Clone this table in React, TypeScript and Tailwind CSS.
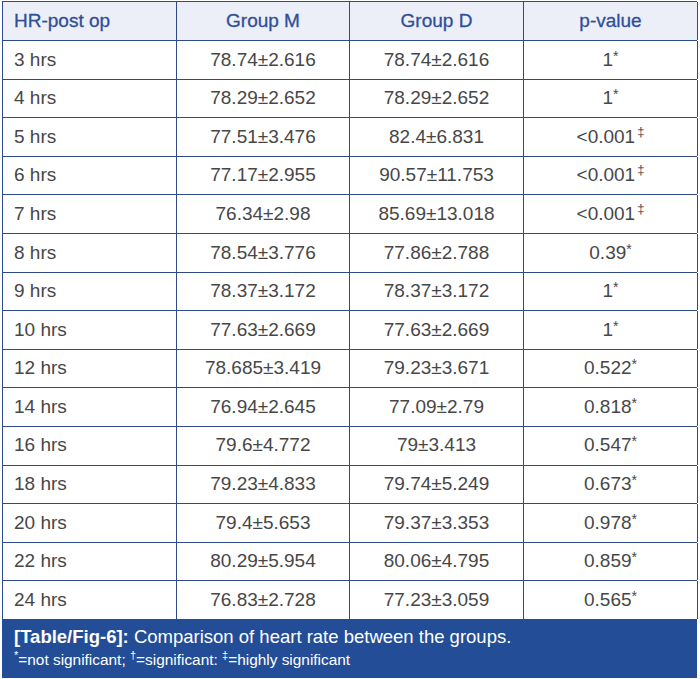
const rows: [string, string, string, string, string][] = [
  ["3 hrs", "78.74±2.616", "78.74±2.616", "1", "*"],
  ["4 hrs", "78.29±2.652", "78.29±2.652", "1", "*"],
  ["5 hrs", "77.51±3.476", "82.4±6.831", "<0.001", "‡"],
  ["6 hrs", "77.17±2.955", "90.57±11.753", "<0.001", "‡"],
  ["7 hrs", "76.34±2.98", "85.69±13.018", "<0.001", "‡"],
  ["8 hrs", "78.54±3.776", "77.86±2.788", "0.39", "*"],
  ["9 hrs", "78.37±3.172", "78.37±3.172", "1", "*"],
  ["10 hrs", "77.63±2.669", "77.63±2.669", "1", "*"],
  ["12 hrs", "78.685±3.419", "79.23±3.671", "0.522", "*"],
  ["14 hrs", "76.94±2.645", "77.09±2.79", "0.818", "*"],
  ["16 hrs", "79.6±4.772", "79±3.413", "0.547", "*"],
  ["18 hrs", "79.23±4.833", "79.74±5.249", "0.673", "*"],
  ["20 hrs", "79.4±5.653", "79.37±3.353", "0.978", "*"],
  ["22 hrs", "80.29±5.954", "80.06±4.795", "0.859", "*"],
  ["24 hrs", "76.83±2.728", "77.23±3.059", "0.565", "*"],
];

const cell = "border-r border-[#2c4b88] flex items-center justify-center";

export default function App() {
  return (
    <div className="w-[700px] h-[679px] bg-white pt-[1px] pl-[2px] font-['Liberation_Sans',Arial,sans-serif]">
      <div className="w-[695px] border-l border-t border-[#2c4b88]">
        <div className="grid grid-cols-[174px_173px_174px_174px] h-[39px] bg-[#eceef8] border-b border-[#2c4b88] text-[19px] text-[#2f4f98] [-webkit-text-stroke:0.3px_#2f4f98]">
          <div className="border-r border-[#2c4b88] flex items-center pl-[11px]">HR-post op</div>
          <div className={cell}>Group M</div>
          <div className={cell}>Group D</div>
          <div className={cell}>p-value</div>
        </div>
        {rows.map(([t, m, d, p, s]) => (
          <div
            key={t}
            className="grid grid-cols-[174px_173px_174px_174px] h-[38.6px] border-b border-[#2c4b88] text-[19px] text-[#474747] last:border-b-0"
          >
            <div className="border-r border-[#2c4b88] flex items-center pl-[11px]">{t}</div>
            <div className={cell}>{m}</div>
            <div className={cell}>{d}</div>
            <div className={cell}>
              <span>
                {p}
                <sup className={s === "*" ? "text-[14px] top-[-5px]" : "text-[13px] top-[-7px] ml-[2px]"}>{s}</sup>
              </span>
            </div>
          </div>
        ))}
        <div className="bg-[#234d96] h-[58px] -ml-[1px] w-[695px] text-white px-[12px] pt-[5px]">
          <div className="text-[18.5px] leading-[23px]">
            <span className="font-bold">[Table/Fig-6]:</span> Comparison of heart rate between the groups.
          </div>
          <div className="text-[15.4px] leading-[21px] mt-[1px]">
            <sup className="text-[11px]">*</sup>=not significant; <sup className="text-[11px]">†</sup>=significant:{" "}
            <sup className="text-[11px]">‡</sup>=highly significant
          </div>
        </div>
      </div>
    </div>
  );
}
